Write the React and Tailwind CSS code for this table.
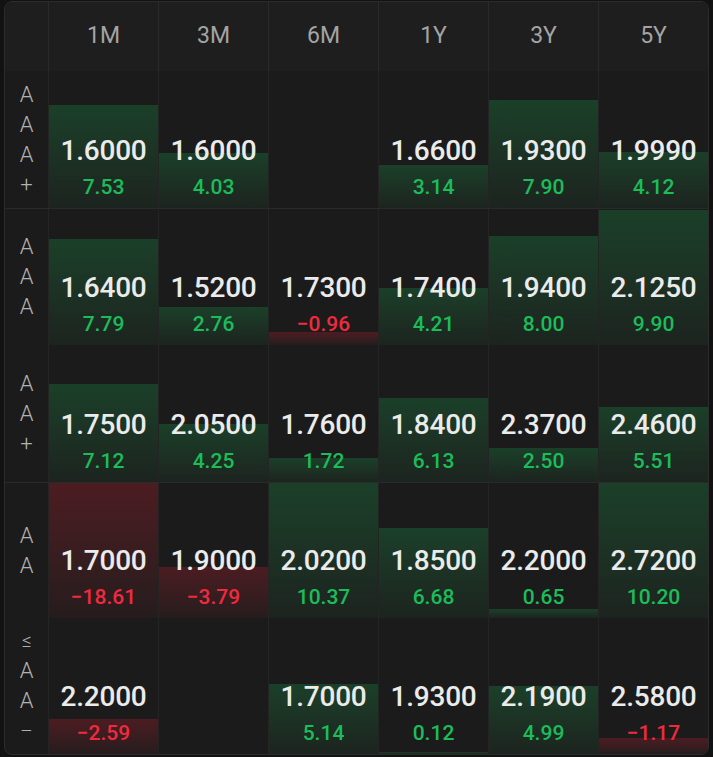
import React from "react";

const cols = ["1M", "3M", "6M", "1Y", "3Y", "5Y"];

const rows = [
  { label: ["A", "A", "A", "+"], h: "h-[137px]", border: false, cells: [["1.6000", 7.53], ["1.6000", 4.03], null, ["1.6600", 3.14], ["1.9300", 7.9], ["1.9990", 4.12]] },
  { label: ["A", "A", "A"], h: "h-[137px]", border: true, cells: [["1.6400", 7.79], ["1.5200", 2.76], ["1.7300", -0.96], ["1.7400", 4.21], ["1.9400", 8.0], ["2.1250", 9.9]] },
  { label: ["A", "A", "+"], h: "h-[137px]", border: false, cells: [["1.7500", 7.12], ["2.0500", 4.25], ["1.7600", 1.72], ["1.8400", 6.13], ["2.3700", 2.5], ["2.4600", 5.51]] },
  { label: ["A", "A"], h: "h-[136px]", border: true, cells: [["1.7000", -18.61], ["1.9000", -3.79], ["2.0200", 10.37], ["1.8500", 6.68], ["2.2000", 0.65], ["2.7200", 10.2]] },
  { label: ["≤", "A", "A", "–"], h: "h-[136px]", border: false, cells: [["2.2000", -2.59], null, ["1.7000", 5.14], ["1.9300", 0.12], ["2.1900", 4.99], ["2.5800", -1.17]] },
];

function fmt(c) {
  const s = Math.abs(c).toFixed(2);
  return c < 0 ? "\u2212" + s : s;
}

function Cell({ cell }) {
  if (!cell) return <div className="border-l border-[#242424]" />;
  const [v, c] = cell;
  const neg = c < 0;
  const pct = Math.min(Math.abs(c) / 10, 1) * 100;
  return (
    <div className="relative flex flex-col items-center justify-end pb-[7px] border-l border-[#242424]">
      <div
        className={
          neg
            ? "absolute bottom-0 left-0 right-0 bg-linear-to-b from-[#4c1c22] to-[#261c1d]"
            : "absolute bottom-0 left-0 right-0 bg-linear-to-b from-[#1a4029] to-[#1c241f]"
        }
        style={{ height: pct + "%" }}
      />
      <div className="relative h-[44px] leading-[44px] text-[28px] font-medium text-[#ebebeb] tracking-[-0.2px]">{v}</div>
      <div className={neg ? "relative h-[28px] leading-[28px] text-[21px] font-medium text-[#f02a3e]" : "relative h-[28px] leading-[28px] text-[21px] font-medium text-[#1bbd5a]"}>
        {fmt(c)}
      </div>
    </div>
  );
}

export default function App() {
  return (
    <div className="min-h-[757px] w-[713px] bg-[#121212] pt-[1px] pl-[4px]" style={{ fontFamily: "Roboto, 'Noto Sans', sans-serif" }}>
      <div className="w-[705px] overflow-hidden rounded-[8px] border border-[#2c2c2c] bg-[#1b1b1b]">
        <div className="grid h-[69px] grid-cols-[43px_repeat(6,110px)] bg-[#1e1e1e]">
          <div />
          {cols.map((c) => (
            <div key={c} className="flex items-center justify-center border-l border-[#2a2a2a] text-[23px] font-normal text-[#a4a4a4]">
              {c}
            </div>
          ))}
        </div>
        {rows.map((r, i) => (
          <div
            key={i}
            className={
              r.border
                ? `grid grid-cols-[43px_repeat(6,110px)] border-t border-[#2a2a2a] ${r.h}`
                : `grid grid-cols-[43px_repeat(6,110px)] ${r.h}`
            }
          >
            <div className="flex flex-col items-center justify-center text-[22px] font-light leading-[30px] text-[#b2b2b2]">
              {r.label.map((ch, j) => (
                <span key={j} className={ch === "A" ? "" : ch === "+" ? "text-[22px]" : "text-[19px]"}>
                  {ch}
                </span>
              ))}
            </div>
            {r.cells.map((cell, j) => (
              <Cell key={j} cell={cell} />
            ))}
          </div>
        ))}
      </div>
    </div>
  );
}
